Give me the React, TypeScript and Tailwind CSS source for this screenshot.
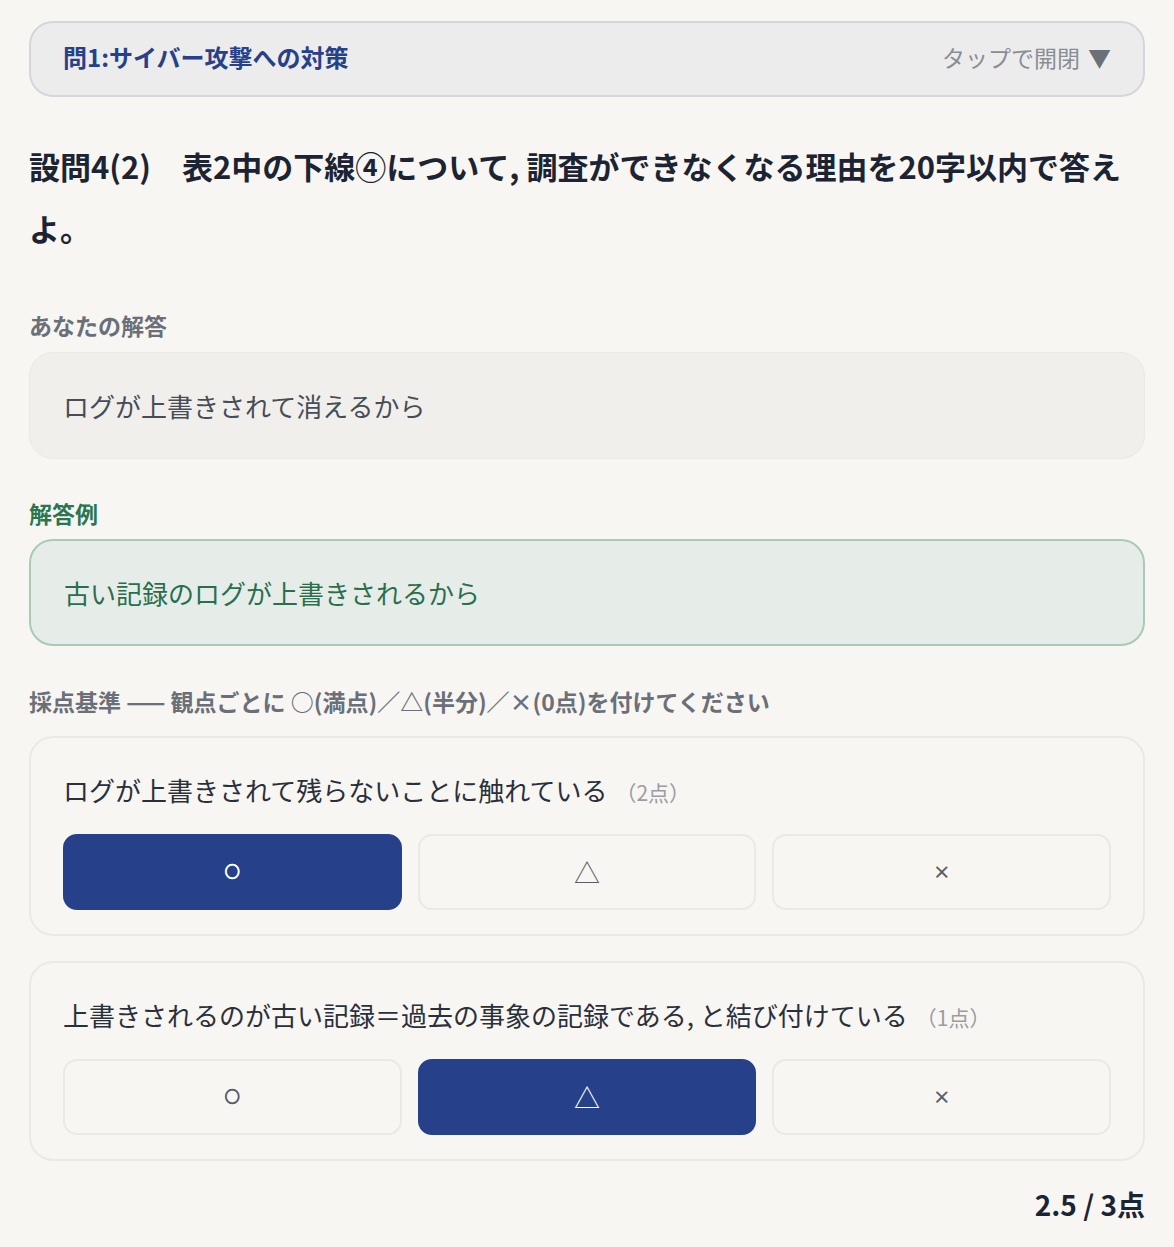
import { useState } from "react";

// Grading view for one written-answer question: accordion header, prompt,
// the user's answer, the model answer and per-criterion ○/△/× buttons.

type Mark = "full" | "half" | "zero";

const criteria = [
  { text: "ログが上書きされて残らないことに触れている", points: 2, initial: "full" as Mark },
  {
    text: "上書きされるのが古い記録＝過去の事象の記録である, と結び付けている",
    points: 1,
    initial: "half" as Mark,
  },
];

const marks: { key: Mark; label: string; cls: string }[] = [
  { key: "full", label: "○", cls: "text-[15px] font-black [-webkit-text-stroke:1px_currentColor]" },
  { key: "half", label: "△", cls: "text-[26px]" },
  { key: "zero", label: "×", cls: "text-[18px] font-bold" },
];

export default function App() {
  const [selected, setSelected] = useState<Mark[]>(criteria.map((c) => c.initial));

  const score = criteria.reduce((sum, c, i) => {
    const m = selected[i];
    return sum + (m === "full" ? c.points : m === "half" ? c.points / 2 : 0);
  }, 0);
  const total = criteria.reduce((s, c) => s + c.points, 0);

  return (
    <div
      className="min-h-[1247px] bg-[#f7f6f2] px-[29px] pt-[21px] pb-8"
      style={{ fontFamily: '"Noto Sans CJK JP", "Noto Sans", sans-serif' }}
    >
      {/* Accordion header */}
      <div className="flex h-[76px] items-center justify-between rounded-[24px] border-2 border-[#d5d6db] bg-[#ececed] px-[32px] pb-[4px]">
        <span className="text-[24px] font-bold text-[#26418a]">問1:サイバー攻撃への対策</span>
        <span className="text-[23px] text-[#8a8d94]">
          タップで開閉<span className="ml-[8px] text-[#6b6f78]">▼</span>
        </span>
      </div>

      {/* Prompt */}
      <h2 className="mt-[38px] text-[31px] font-bold leading-[62px] text-[#1c2433]">
        設問4(2)　表2中の下線④について, 調査ができなくなる理由を20字以内で答えよ。
      </h2>

      {/* User answer */}
      <p className="mt-[49px] text-[23px] font-bold text-[#6b6f78]">あなたの解答</p>
      <div className="mt-[9px] flex h-[107px] items-center rounded-[24px] border border-[#ebe9e4] bg-[#f0efec] px-[33px]">
        <span className="text-[26px] text-[#474c57]">ログが上書きされて消えるから</span>
      </div>

      {/* Model answer */}
      <p className="mt-[37px] text-[23px] font-bold text-[#2b7650]">解答例</p>
      <div className="mt-[9px] flex h-[107px] items-center rounded-[24px] border-2 border-[#a9cab5] bg-[#e6ede8] px-[33px]">
        <span className="text-[26px] text-[#2b6e4e]">古い記録のログが上書きされるから</span>
      </div>

      {/* Criteria */}
      <p className="mt-[38px] text-[23px] font-bold text-[#6b6f78]">
        採点基準 —— 観点ごとに ○(満点)／△(半分)／×(0点)を付けてください
      </p>

      <div className="mt-[17px] flex flex-col gap-[25px]">
        {criteria.map((c, i) => (
          <div
            key={i}
            className="rounded-[24px] border-2 border-[#ebe9e4] bg-[#f7f6f2] px-[32px] pt-[32px] pb-[24px]"
          >
            <p className="text-[26px] text-[#2a303b]">
              {c.text}
              <span className="ml-2 text-[21px] text-[#9a9ca2]">（{c.points}点）</span>
            </p>
            <div className="mt-[25px] grid grid-cols-3 gap-[16px]">
              {marks.map((m) => {
                const on = selected[i] === m.key;
                return (
                  <button
                    key={m.key}
                    onClick={() =>
                      setSelected((prev) => prev.map((v, j) => (j === i ? m.key : v)))
                    }
                    className={`flex h-[76px] items-center justify-center rounded-[14px] border-2 ${
                      on
                        ? "border-[#26418a] bg-[#26418a] text-white"
                        : "border-[#ebe9e4] bg-[#f7f6f2] text-[#5a5e68]"
                    }`}
                  >
                    <span className={m.cls}>{m.label}</span>
                  </button>
                );
              })}
            </div>
          </div>
        ))}
      </div>

      {/* Score */}
      <p className="mt-[22px] text-right text-[28px] font-bold text-[#1c2433]">
        {score} / {total}点
      </p>
    </div>
  );
}
